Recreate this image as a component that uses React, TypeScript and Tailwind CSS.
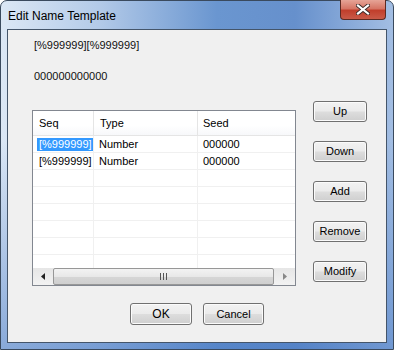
import React from "react";

const btn =
  "h-[21px] rounded-[3px] border border-[#707070] bg-[linear-gradient(to_bottom,#f2f2f2_0%,#ebebeb_48%,#dddddd_52%,#cfcfcf_100%)] shadow-[inset_0_0_0_1px_#fbfbfb] text-[11px] leading-[13px] text-black flex items-center justify-center";

function Row({ seq, type, seed, selected }: { seq?: string; type?: string; seed?: string; selected?: boolean }) {
  return (
    <div className="flex h-[17px] border-b border-[#f0f0f0] text-[11px] leading-[13px] text-[#000]">
      <div className="w-[61px] border-r border-[#f0f0f0] flex items-center pl-[4px]">
        {seq && (
          <span className={selected ? "bg-[#3399ff] text-white pl-[2px] pr-[1px] h-[13px] w-[56px]" : "pl-[2px]"}>{seq}</span>
        )}
      </div>
      <div className="w-[104px] border-r border-[#f0f0f0] flex items-center pl-[5px]">{type}</div>
      <div className="flex-1 flex items-center pl-[5px]">{seed}</div>
    </div>
  );
}

export default function App() {
  return (
    <div className="w-[394px] h-[350px] font-['Liberation_Sans',Arial,sans-serif]">
      <div className="relative w-full h-full rounded-t-[7px] border border-[#3a4a5e] bg-[linear-gradient(to_bottom,rgba(255,255,255,0)_0%,rgba(255,255,255,0)_40%,rgba(70,120,195,0.55)_100%),linear-gradient(to_right,#dbe7f5_0%,#b3cae8_25%,#6a96d0_55%,#6690cc_75%,#a3bee3_100%)] flex flex-col">
        <div className="h-[28px] flex items-center pl-[7px] pt-[1px] text-[12px] text-black">Edit Name Template</div>
        <div className="absolute top-[-1px] right-[7px] w-[46px] h-[20px] rounded-b-[4px] border border-[#5c2a22] border-t-0 bg-[linear-gradient(to_bottom,#e6a497_0%,#d67565_45%,#c13f2c_55%,#c95a48_100%)] flex items-center justify-center">
          <svg width="14" height="11" viewBox="0 0 14 11">
            <path d="M2 1.5 L12 9.5 M12 1.5 L2 9.5" stroke="#3b2a28" strokeWidth="4" strokeLinecap="square" />
            <path d="M2 1.5 L12 9.5 M12 1.5 L2 9.5" stroke="#ffffff" strokeWidth="2.2" strokeLinecap="square" />
          </svg>
        </div>
        <div className="flex-1 mx-[6px] mb-[6px] border border-[#44556a] bg-[#f0f0f0] flex flex-col">
          <div className="pl-[26px] pt-[9px] text-[11px] leading-[13px] text-[#111]">[%999999][%999999]</div>
          <div className="pl-[26px] mt-[18px] text-[11px] leading-[13px] text-[#111]">000000000000</div>
          <div className="flex mt-[18px] pl-[24px]">
            <div className="mt-[9px] w-[264px] h-[176px] border border-[#828790] bg-white flex flex-col">
              <div className="flex h-[25px] border-b border-[#e5e5e5] text-[11px] leading-[13px] text-black bg-[linear-gradient(to_bottom,#ffffff_0%,#ffffff_60%,#f7f8fa_100%)]">
                <div className="w-[61px] border-r border-[#e5e5e5] flex items-center pl-[6px]">Seq</div>
                <div className="w-[104px] border-r border-[#e5e5e5] flex items-center pl-[6px]">Type</div>
                <div className="flex-1 flex items-center pl-[5px]">Seed</div>
              </div>
              <div className="h-[132px] overflow-hidden">
                <Row seq="[%999999]" type="Number" seed="000000" selected />
                <Row seq="[%999999]" type="Number" seed="000000" />
                <Row />
                <Row />
                <Row />
                <Row />
                <Row />
                <Row />
              </div>
              <div className="h-[17px] flex bg-[linear-gradient(to_bottom,#e6e6e6,#f2f2f2)]">
                <div className="w-[20px] flex items-center justify-center">
                  <svg width="4" height="7" viewBox="0 0 4 7"><path d="M4 0 L0 3.5 L4 7 Z" fill="#222" /></svg>
                </div>
                <div className="w-[221px] rounded-[2px] border border-[#979797] bg-[linear-gradient(to_bottom,#f3f3f3_0%,#e8e8e8_50%,#d6d6d6_51%,#cfcfcf_100%)] flex items-center justify-center">
                  <svg width="7" height="7" viewBox="0 0 7 7">
                    <path d="M0.5 0 V7 M3.5 0 V7 M6.5 0 V7" stroke="#555" strokeWidth="1" />
                  </svg>
                </div>
                <div className="flex-1 flex items-center justify-center">
                  <svg width="4" height="7" viewBox="0 0 4 7"><path d="M0 0 L4 3.5 L0 7 Z" fill="#888" /></svg>
                </div>
              </div>
            </div>
            <div className="ml-[17px] flex flex-col gap-[19px]">
              <div className={btn + " w-[54px]"}>Up</div>
              <div className={btn + " w-[54px]"}>Down</div>
              <div className={btn + " w-[54px]"}>Add</div>
              <div className={btn + " w-[54px]"}>Remove</div>
              <div className={btn + " w-[54px]"}>Modify</div>
            </div>
          </div>
          <div className="mt-[17px] flex justify-center gap-[11px]">
            <div className={btn + " w-[62px] h-[22px] text-[12px]"}>OK</div>
            <div className={btn + " w-[61px] h-[22px]"}>Cancel</div>
          </div>
        </div>
      </div>
    </div>
  );
}
